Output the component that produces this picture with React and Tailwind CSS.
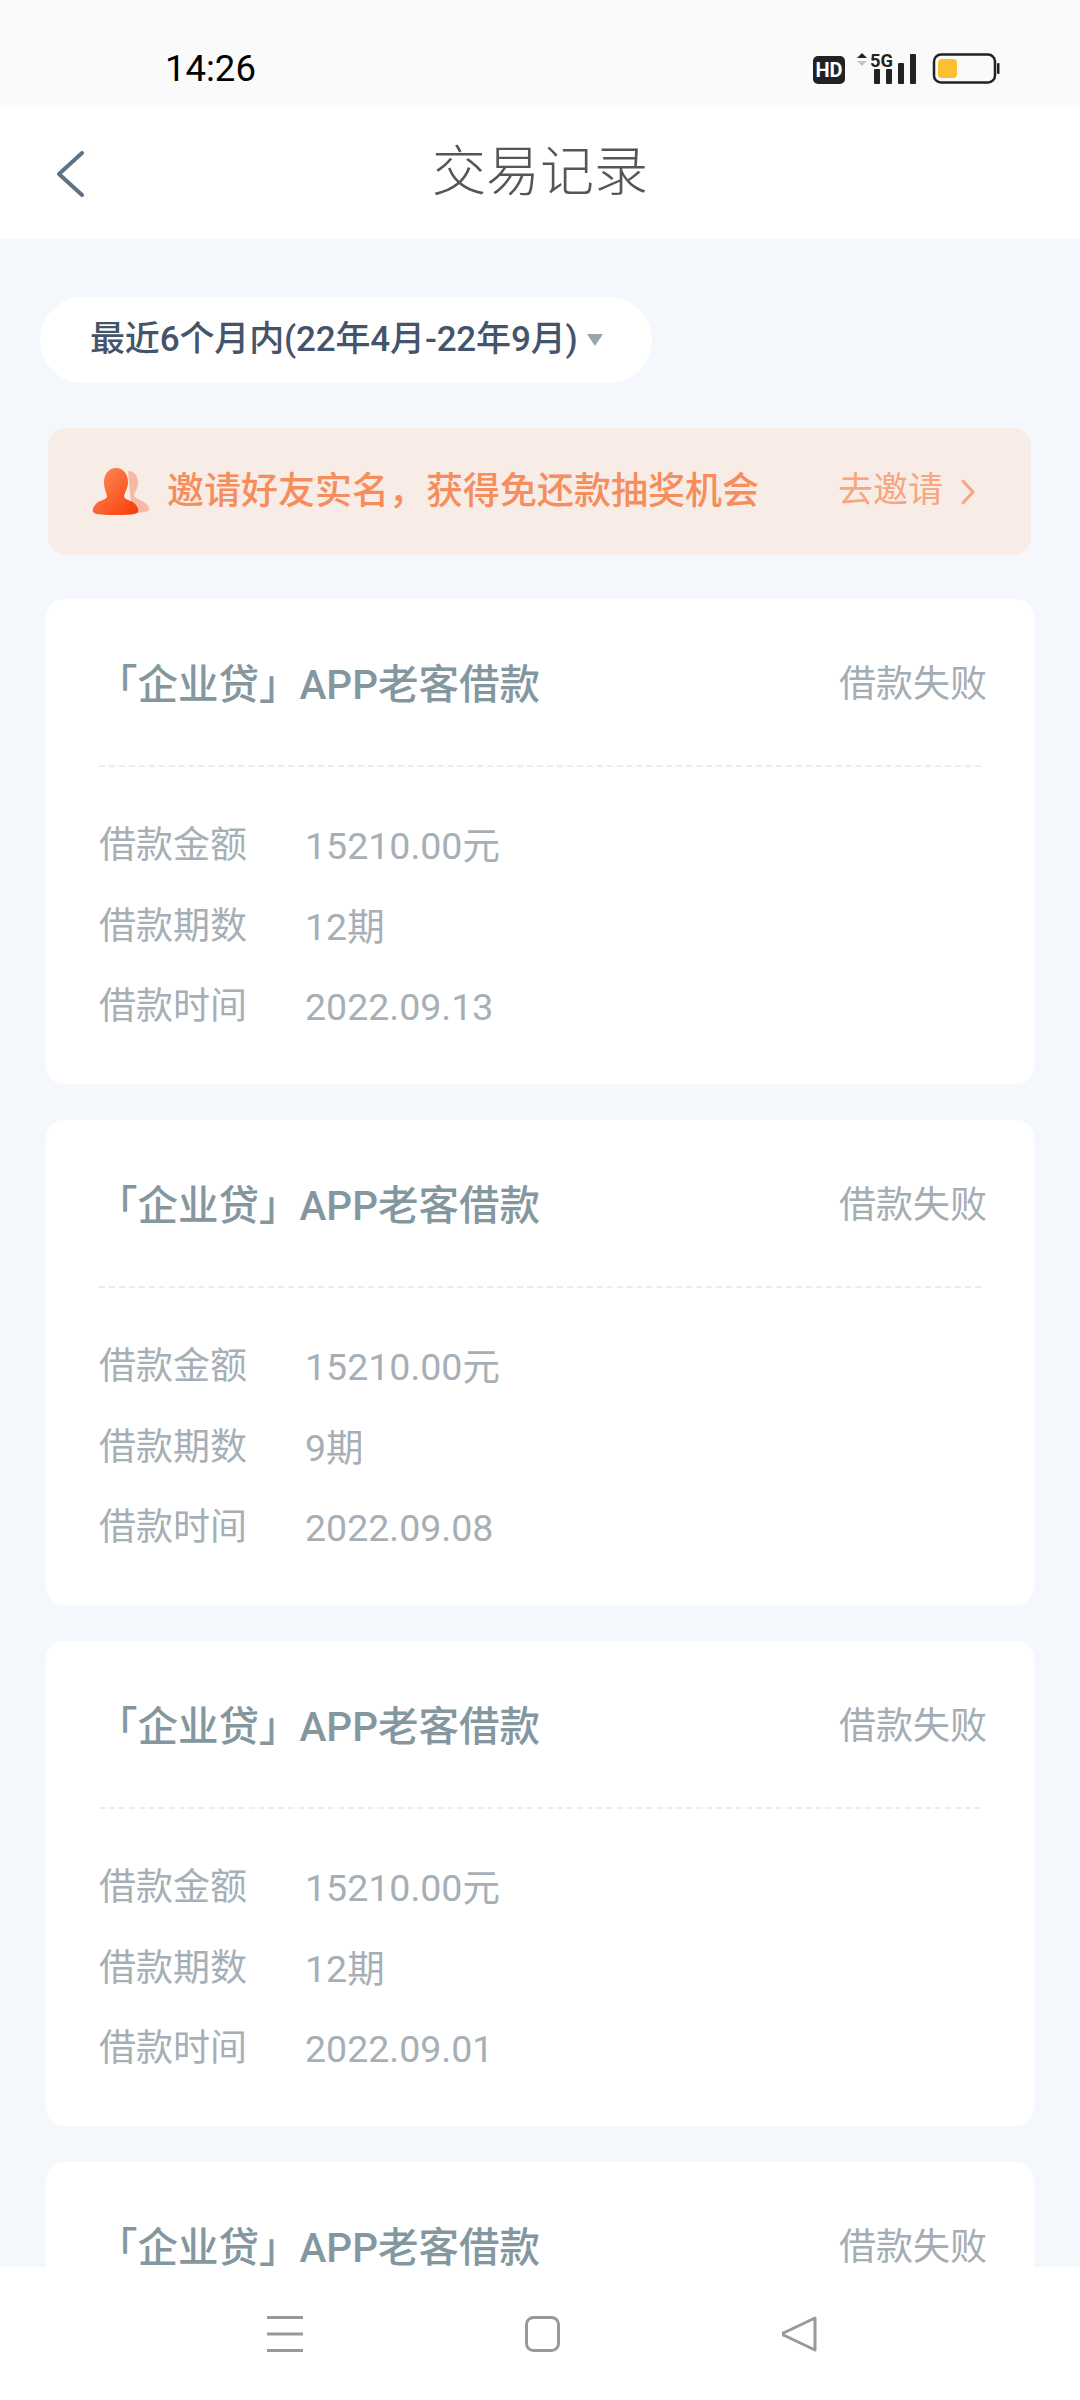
import React from "react";

const font = "font-['Roboto','Noto_Sans_CJK_SC',sans-serif]";

const inviteText = "邀请好友实名\uFF0C获得免还款抽奖机会";

const records = [
  { months: "12期", date: "2022.09.13" },
  { months: "9期", date: "2022.09.08" },
  { months: "12期", date: "2022.09.01" },
  { months: "12期", date: "2022.08.26" },
];

function StatusBar() {
  return (
    <div className="h-[107px] bg-[#fafafa] flex items-center shrink-0 pt-[30px] pl-[165px] pr-[77px] justify-between">
      <span className="text-[36.5px] leading-[40px] text-black font-normal">14:26</span>
      <svg className="overflow-visible" width="190" height="36" viewBox="0 0 190 36" fill="none">
        <rect x="0" y="5" width="32" height="28" rx="5" fill="#222" />
        <text x="16" y="26" textAnchor="middle" fontSize="20" fontWeight="700" fill="#fff" fontFamily="Roboto">HD</text>
        <path d="M44 7l5-5 5 5z" fill="#222" />
        <path d="M44 10l5 5 5-5z" fill="#c4c4c4" />
        <text x="57" y="16" fontSize="19" fontWeight="700" fill="#222" fontFamily="Roboto" textLength="23" lengthAdjust="spacingAndGlyphs">5G</text>
        <rect x="61" y="18" width="6" height="15" rx="1" fill="#222" />
        <rect x="73" y="18" width="6" height="15" rx="1" fill="#222" />
        <rect x="85" y="12" width="6" height="21" rx="1" fill="#222" />
        <rect x="97" y="3" width="6" height="30" rx="1" fill="#222" />
        <rect x="121" y="3.5" width="61" height="28" rx="7" stroke="#222" strokeWidth="2.5" />
        <rect x="125" y="8" width="19" height="19" rx="4" fill="#fcbf2d" />
        <rect x="184" y="12" width="2.5" height="11" rx="1" fill="#222" />
      </svg>
    </div>
  );
}

function Header() {
  return (
    <div className="h-[132px] bg-white relative flex items-center justify-center shrink-0">
      <svg className="absolute left-[55px] top-[44px]" width="30" height="46" viewBox="0 0 30 46" fill="none">
        <path d="M27 2L4 23l23 21" stroke="#5e7286" strokeWidth="4" strokeLinecap="round" strokeLinejoin="round" />
      </svg>
      <span className="text-[54px] leading-[64px] text-[#555659] font-light">交易记录</span>
    </div>
  );
}

function InviteIcon() {
  return (
    <svg width="58" height="47" viewBox="0 0 58 47">
      <defs>
        <linearGradient id="personFill" x1="0" y1="0" x2="1" y2="1">
          <stop offset="0" stopColor="#ff8f5a" />
          <stop offset="1" stopColor="#f83a08" />
        </linearGradient>
      </defs>
      <path d="M36 3c7 0 10 6 10 12 0 5-3 9-4 12 0 3 5 4 10 7 4 3 6 6 5 8-1 2-8 3-17 3z" fill="#f8b9a2" />
      <path d="M24 0c7 0 12 6 12 14 0 6-3 10-4 14 0 3 5 4 9 6 4 3 6 7 5 10-1 2-5 3-23 3S3 46 1 44c-1-3 1-7 5-10 4-2 9-3 9-6-1-4-3-8-3-14C12 6 17 0 24 0z" fill="url(#personFill)" />
    </svg>
  );
}

function RecordCard({ months, date }) {
  return (
    <div className="bg-white rounded-[18px] h-[485px] shrink-0 px-[53px]">
      <div className="h-[168px] flex items-start justify-between border-b-2 border-dashed border-[#ececec] pt-[58px]">
        <span className="text-[40.5px] leading-[56px] font-medium text-[#84979f] -ml-[2px]">「企业贷」APP老客借款</span>
        <span className="text-[37px] leading-[56px] text-[#a4adb4] -mr-[6px]">借款失败</span>
      </div>
      <div className="pt-[51px] flex flex-col gap-[24.5px]">
        <Row label="借款金额" value="15210.00元" />
        <Row label="借款期数" value={months} />
        <Row label="借款时间" value={date} />
      </div>
    </div>
  );
}

function Row({ label, value }) {
  return (
    <div className="flex items-center h-[56px] text-[37px] leading-[56px] text-[#a7afb6]">
      <span className="w-[206px]">{label}</span>
      <span className="text-[37.5px]">{value}</span>
    </div>
  );
}

function NavBar() {
  return (
    <div className="h-[133px] bg-white shrink-0 flex items-start justify-center gap-[222px] pt-[49px] pl-[4px]">
      <svg width="36" height="36" viewBox="0 0 36 36">
        <rect x="0" y="0" width="36" height="3" fill="#999" />
        <rect x="0" y="16.5" width="36" height="3" fill="#999" />
        <rect x="0" y="33" width="36" height="3" fill="#999" />
      </svg>
      <svg width="35" height="36" viewBox="0 0 35 36" fill="none">
        <rect x="1.5" y="1.5" width="32" height="33" rx="7" stroke="#999" strokeWidth="3" />
      </svg>
      <svg width="35" height="36" viewBox="0 0 35 36" fill="none">
        <path d="M33 2v32L2.5 19.5a1.5 1.5 0 0 1 0-3z" stroke="#999" strokeWidth="3" strokeLinejoin="round" />
      </svg>
    </div>
  );
}

export default function App() {
  return (
    <div className={`w-[1080px] h-[2400px] flex flex-col overflow-hidden bg-[#f4f7fb] ${font}`}>
      <StatusBar />
      <Header />
      <div className="flex-1 min-h-0 overflow-hidden">
        <div className="pt-[58px] pl-[40px]">
          <div className="w-[612px] h-[86px] rounded-full bg-white flex items-center pl-[50px]">
            <span className="text-[35px] font-medium text-[#44546a] tracking-[-0.15px]">最近6个月内(22年4月-22年9月)</span>
            <svg className="ml-[9px]" width="16" height="12" viewBox="0 0 16 12">
              <path d="M0 0h16l-8 12z" fill="#9aa5ab" />
            </svg>
          </div>
        </div>
        <div className="mt-[45px] ml-[48px] mr-[49px] h-[127px] rounded-[18px] bg-[#f8ece7] flex items-center pl-[44px] pr-[56px]">
          <InviteIcon />
          <span className="ml-[17px] text-[37px] font-medium text-[#f58e5c]">{inviteText}</span>
          <span className="ml-auto text-[35px] text-[#f7a681]">去邀请</span>
          <svg className="ml-[18px]" width="14" height="26" viewBox="0 0 14 26" fill="none">
            <path d="M2 2l10 11L2 24" stroke="#f7a681" strokeWidth="3" strokeLinecap="round" strokeLinejoin="round" />
          </svg>
        </div>
        <div className="mt-[44px] mx-[46px] flex flex-col gap-[36px]">
          {records.map((r, i) => (
            <RecordCard key={i} months={r.months} date={r.date} />
          ))}
        </div>
      </div>
      <NavBar />
    </div>
  );
}
